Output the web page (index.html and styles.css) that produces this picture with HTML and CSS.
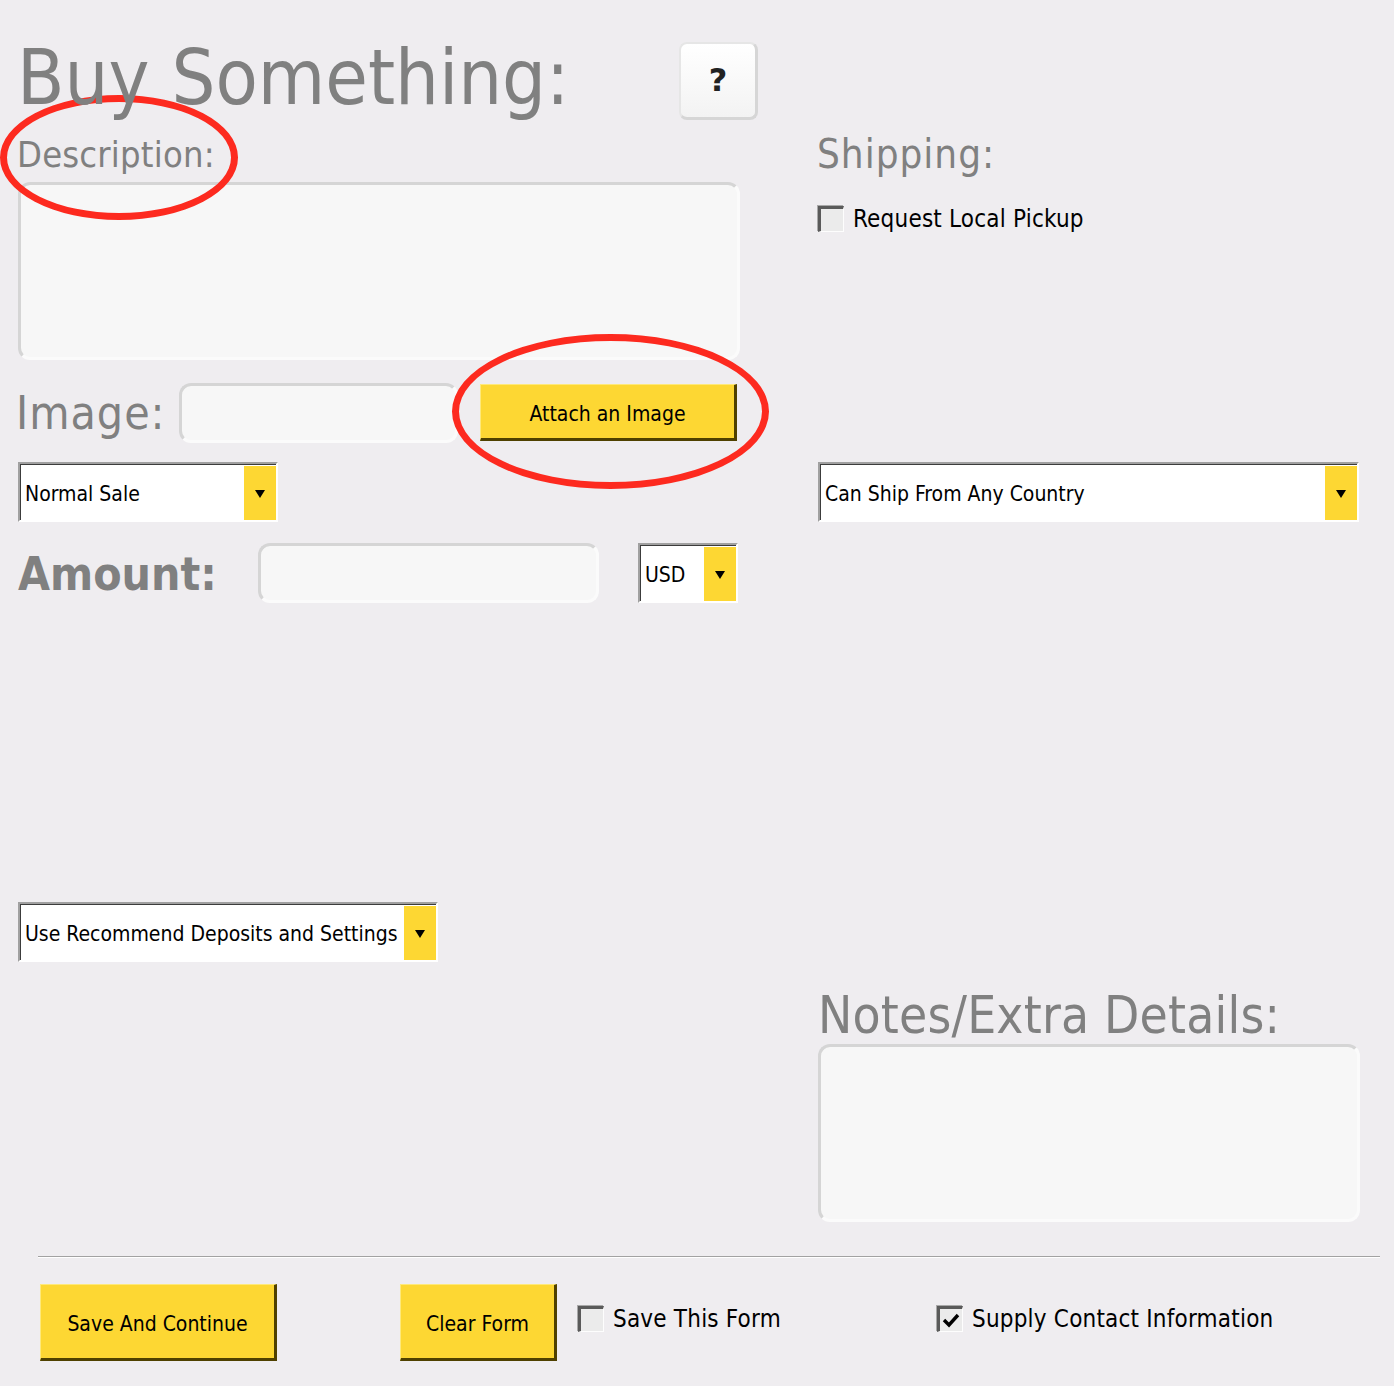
FILE: index.html
```html
<!DOCTYPE html>
<html lang="en">
<head>
<meta charset="utf-8">
<title>Buy Something</title>
<link rel="stylesheet" href="styles.css">
</head>
<body>
<main class="form">
  <div class="head">
    <h1 class="title">Buy Something:</h1>
    <button class="help" type="button">?</button>
  </div>

  <div class="lbl desc-lbl">Description:</div>
  <div class="lbl ship-lbl">Shipping:</div>

  <div class="field desc-box"></div>
  <label class="check pickup"><span class="box"></span><span class="check-text">Request Local Pickup</span></label>

  <div class="image-row">
    <div class="lbl image-lbl">Image:</div>
    <div class="field image-field"></div>
    <button class="btn attach" type="button">Attach an Image</button>
  </div>

  <div class="select sale"><span class="select-text">Normal Sale</span><span class="select-btn"><i class="arrow"></i></span></div>
  <div class="select country"><span class="select-text">Can Ship From Any Country</span><span class="select-btn"><i class="arrow"></i></span></div>

  <div class="amount-row">
    <div class="lbl amount-lbl">Amount:</div>
    <div class="field amount-field"></div>
    <div class="select usd"><span class="select-text">USD</span><span class="select-btn"><i class="arrow"></i></span></div>
  </div>

  <div class="select deposits"><span class="select-text">Use Recommend Deposits and Settings</span><span class="select-btn"><i class="arrow"></i></span></div>

  <div class="lbl notes-lbl">Notes/Extra Details:</div>
  <div class="field notes-box"></div>
</main>

<footer class="footer">
  <div class="divider"></div>
  <div class="actions">
    <button class="btn save" type="button">Save And Continue</button>
    <button class="btn clear" type="button">Clear Form</button>
    <label class="check save-form"><span class="box"></span><span class="check-text">Save This Form</span></label>
    <label class="check contact"><span class="box checked"><svg width="18" height="15" viewBox="0 0 18 15"><polyline points="2,7 7,12 16,2" fill="none" stroke="#000" stroke-width="3.4"/></svg></span><span class="check-text">Supply Contact Information</span></label>
  </div>
</footer>

<div class="mark mark-1"></div>
<div class="mark mark-2"></div>
</body>
</html>
```

FILE: styles.css
```css
* { box-sizing: border-box; }
html, body { margin: 0; }
body {
  background: #efedf0;
  font-family: "DejaVu Sans Condensed", "DejaVu Sans", sans-serif;
  font-stretch: semi-condensed;
  color: #000;
  width: 1394px;
  min-height: 1386px;
  position: relative;
  overflow: hidden;
}

.form {
  display: grid;
  grid-template-columns: 722px 542px;
  column-gap: 78px;
  padding: 42px 0 0 18px;
  align-items: start;
}

/* header */
.head { grid-column: 1; grid-row: 1; display: flex; align-items: flex-start; height: 79px; }
.title {
  flex: none;
  margin: 0 0 0 -1px;
  width: 662px;
  font-size: 77px;
  line-height: 71px;
  font-weight: normal;
  color: #808080;
  white-space: nowrap;
  position: relative;
  z-index: 2;
}
.help {
  flex: none;
  width: 79px;
  height: 78px;
  padding: 0 0 2px 0;
  border: 2px solid #e6e6e6;
  border-right: 3px solid #d6d6d6;
  border-bottom: 3px solid #d6d6d6;
  border-radius: 8px;
  background: linear-gradient(#ffffff, #f3f3f3);
  font-family: "DejaVu Sans", sans-serif;
  font-weight: bold;
  font-size: 32px;
  color: #222;
  display: flex;
  align-items: center;
  justify-content: center;
}

/* labels */
.lbl { color: #808080; white-space: nowrap; }
.desc-lbl { grid-column: 1; grid-row: 2; font-size: 36px; line-height: 40px; margin: 14px 0 0 -1px; letter-spacing: 0.2px; }
.ship-lbl { grid-column: 2; grid-row: 2; font-size: 40px; line-height: 40px; margin: 13px 0 0 -1px; letter-spacing: 1px; }
.notes-lbl { grid-column: 2; grid-row: 8; font-size: 51px; line-height: 56px; margin: 26px 0 0 0; letter-spacing: 0.2px; }

/* text fields */
.field {
  background: #f7f7f7;
  border: 3px solid;
  border-color: #d5d5d5 #fbfbfb #fbfbfb #d5d5d5;
  border-radius: 12px;
}
.desc-box { grid-column: 1; grid-row: 3; height: 178px; margin-top: 7px; }
.notes-box { grid-column: 2; grid-row: 9; height: 178px; }

/* checkbox */
.check { display: flex; align-items: center; gap: 9px; font-size: 24px; line-height: 26px; letter-spacing: 0.2px; }
.box {
  width: 26px;
  height: 26px;
  flex: none;
  border-style: solid;
  border-width: 3px 1px 1px 3px;
  border-color: #5a5a5a #fdfdfd #fdfdfd #5a5a5a;
  box-shadow: -1px -1px 0 #a8a8a8;
  background: #ebebeb;
  display: flex;
  align-items: center;
  justify-content: center;
}
.pickup { grid-column: 2; grid-row: 3; margin-top: 31px; }

/* image row */
.image-row { grid-column: 1; grid-row: 4; margin-top: 23px; display: flex; align-items: flex-start; }
.image-lbl { width: 163px; height: 60px; margin-left: -2px; font-size: 46px; line-height: 60px; letter-spacing: 1px; }
.image-field { width: 279px; height: 60px; }
.attach { width: 257px; height: 57px; margin: 1px 0 0 22px; }

/* selects */
.select {
  display: flex;
  height: 60px;
  background: #fff;
  border: 2px solid;
  border-color: #a0a0a0 #fff #fff #a0a0a0;
  box-shadow: inset 1px 1px 0 #3c3c3c;
}
.select-text {
  flex: 1;
  display: flex;
  align-items: center;
  padding: 3px 0 0 5px;
  font-size: 21px;
  white-space: nowrap;
}
.select-btn {
  width: 32px;
  margin-top: 2px;
  background: #fdd733;
  display: flex;
  align-items: center;
  justify-content: center;
}
.arrow {
  width: 0;
  height: 0;
  margin-top: 2px;
  border-left: 5px solid transparent;
  border-right: 5px solid transparent;
  border-top: 8px solid #000;
}
.sale { grid-column: 1; grid-row: 5; margin-top: 19px; width: 260px; }
.country { grid-column: 2; grid-row: 5; margin-top: 19px; width: 541px; }
.deposits { grid-column: 1; grid-row: 7; margin-top: 299px; width: 420px; }

/* amount row */
.amount-row { grid-column: 1; grid-row: 6; margin-top: 21px; display: flex; align-items: flex-start; }
.amount-lbl { width: 240px; height: 60px; padding-top: 2px; font-size: 46px; font-weight: bold; line-height: 58px; }
.amount-field { width: 341px; height: 60px; }
.usd { width: 100px; margin-left: 39px; }

/* buttons */
.btn {
  padding: 4px 0 0 0;
  background: #fdd733;
  border-style: solid;
  border-width: 1px 3px 3px 1px;
  border-color: #fee97a #4f4100 #4f4100 #fee97a;
  font-family: "DejaVu Sans Condensed", "DejaVu Sans", sans-serif;
  font-stretch: semi-condensed;
  font-size: 21px;
  color: #000;
}

/* footer */
.footer { padding: 34px 14px 0 38px; }
.divider { height: 2px; border-top: 1px solid #a2a2a2; border-bottom: 1px solid #fff; }
.actions { display: flex; align-items: center; margin-top: 26px; padding-left: 2px; }
.actions .check { margin-bottom: 7px; }
.save { width: 237px; height: 77px; }
.clear { width: 157px; height: 77px; margin-left: 123px; }
.save-form { margin-left: 21px; width: 359px; }

/* annotation marks */
.mark {
  position: absolute;
  border: 7px solid #fd2a1f;
  border-radius: 50%;
  pointer-events: none;
  z-index: 1;
}
.mark-1 { left: 0; top: 95px; width: 238px; height: 125px; }
.mark-2 { left: 452px; top: 334px; width: 317px; height: 155px; }
```
